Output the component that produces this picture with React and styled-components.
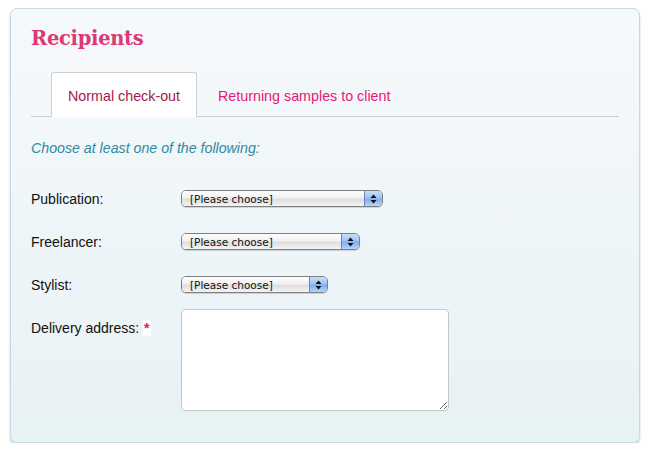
import React from "react";
import styled, { createGlobalStyle } from "styled-components";

const GlobalStyle = createGlobalStyle`
  html, body {
    margin: 0;
    padding: 0;
    background: #fff;
  }
  body {
    font-family: "Liberation Sans", Arial, sans-serif;
  }
`;

const Panel = styled.div`
  width: 630px;
  height: 435px;
  margin: 8px 0 0 10px;
  border: 1px solid #c5d9de;
  border-radius: 7px;
  background: linear-gradient(to bottom, #f6f9fb 0%, #eef5f8 55%, #e7f2f5 100%);
  box-shadow: 0 2px 2px rgba(120, 160, 170, 0.5);
  padding: 0 20px;
  box-sizing: border-box;
`;

const Title = styled.h2`
  margin: 0;
  padding-top: 17px;
  font-family: "DejaVu Serif", Georgia, serif;
  font-weight: bold;
  font-size: 19.5px;
  line-height: 26px;
  color: #db3a72;
  letter-spacing: -0.3px;
`;

const Tabs = styled.div`
  display: flex;
  gap: 4px;
  margin-top: 20px;
  padding-left: 20px;
  border-bottom: 1px solid #cfcfcf;
  height: 44px;
`;

const Tab = styled.div`
  display: flex;
  align-items: center;
  padding: 2px 16px 0;
  height: 45px;
  box-sizing: border-box;
  font-size: 14.3px;
  margin-bottom: -1px;
  color: ${(p) => (p.active ? "#a31a4f" : "#e6177a")};
  background: ${(p) => (p.active ? "#fff" : "transparent")};
  border: 1px solid ${(p) => (p.active ? "#cfcfcf" : "transparent")};
  border-bottom: 1px solid ${(p) => (p.active ? "#fff" : "transparent")};
  border-radius: 3px 3px 0 0;
`;

const Hint = styled.p`
  margin: 22px 0 0;
  font-size: 14.2px;
  font-style: italic;
  color: #2c8ba4;
  line-height: 18px;
`;

const Form = styled.div`
  display: flex;
  flex-direction: column;
  margin-top: 20px;
`;

const Row = styled.div`
  display: grid;
  grid-template-columns: 150px 1fr;
  align-items: ${(p) => (p.top ? "start" : "center")};
  min-height: 43px;
  margin-top: ${(p) => (p.top ? "3px" : "0")};
`;

const Label = styled.label`
  font-size: 14px;
  color: #111;
  padding-top: ${(p) => (p.top ? "11px" : "0")};
`;

const Required = styled.span`
  color: #e0176f;
  font-weight: bold;
  background: #fff;
  padding: 0 1px;
`;

const SelectBox = styled.div`
  display: flex;
  width: ${(p) => p.width}px;
  height: 17px;
  box-sizing: border-box;
  border: 1px solid #7f7f7f;
  border-radius: 5px;
  overflow: hidden;
  box-shadow: 0 1px 1px rgba(0, 0, 0, 0.15);
  cursor: default;
`;

const SelectText = styled.div`
  flex: 1;
  display: flex;
  align-items: center;
  padding-left: 8px;
  font-family: "DejaVu Sans", "Lucida Grande", sans-serif;
  font-size: 10.5px;
  color: #111;
  background: linear-gradient(to bottom, #fdfdfd 0%, #f1f1f1 45%, #dedede 55%, #f4f4f4 100%);
`;

const Stepper = styled.div`
  width: 17px;
  border-left: 1px solid #6a86b8;
  background: linear-gradient(to bottom, #c9defa 0%, #9ec3f3 45%, #7eaeec 55%, #b6d5fb 100%);
  display: flex;
  align-items: center;
  justify-content: center;
`;

const TextArea = styled.textarea`
  width: 268px;
  height: 102px;
  box-sizing: border-box;
  border: 1px solid #c6c6c6;
  border-radius: 4px;
  background: #fff;
  font-family: inherit;
  font-size: 13px;
  outline: none;
  margin: 0;
  display: block;
`;

const Arrows = () => (
  <svg width="7" height="10" viewBox="0 0 7 10">
    <path d="M3.5 0.5 L6.5 4 L0.5 4 Z" fill="#111" />
    <path d="M3.5 9.5 L6.5 6 L0.5 6 Z" fill="#111" />
  </svg>
);

const Select = ({ width }) => (
  <SelectBox width={width}>
    <SelectText>[Please choose]</SelectText>
    <Stepper>
      <Arrows />
    </Stepper>
  </SelectBox>
);

const App = () => {
  return (
    <>
      <GlobalStyle />
      <Panel>
        <Title>Recipients</Title>
        <Tabs>
          <Tab active>Normal check-out</Tab>
          <Tab>Returning samples to client</Tab>
        </Tabs>
        <Hint>Choose at least one of the following:</Hint>
        <Form>
          <Row>
            <Label>Publication:</Label>
            <Select width={202} />
          </Row>
          <Row>
            <Label>Freelancer:</Label>
            <Select width={179} />
          </Row>
          <Row>
            <Label>Stylist:</Label>
            <Select width={147} />
          </Row>
          <Row top>
            <Label top>
              Delivery address: <Required>*</Required>
            </Label>
            <TextArea />
          </Row>
        </Form>
      </Panel>
    </>
  );
};

export default App;
